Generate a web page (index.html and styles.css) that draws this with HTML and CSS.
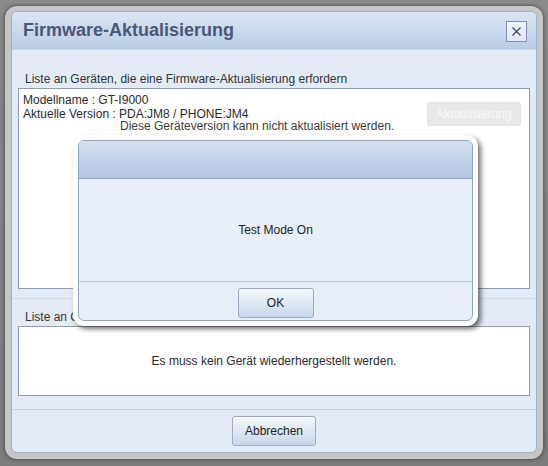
FILE: index.html
```html
<!DOCTYPE html>
<html lang="de">
<head>
  <meta charset="UTF-8">
  <title>Firmware-Aktualisierung</title>
  <link rel="stylesheet" href="styles.css">
</head>
<body>

  <div class="frame">
    <div class="window">
      <header class="win-head">
        <h1>Firmware-Aktualisierung</h1>
        <button class="close" type="button" aria-label="Schließen">
          <svg width="9" height="9" viewBox="0 0 9 9"><path d="M0.5 0.5 L8.5 8.5 M8.5 0.5 L0.5 8.5" stroke="#3c4a68" stroke-width="1.3" fill="none"/></svg>
        </button>
      </header>

      <section class="sect sect-update">
        <p class="label">Liste an Geräten, die eine Firmware-Aktualisierung erfordern</p>
        <div class="box box-update">
          <div class="device">
            <div>Modellname : GT-I9000</div>
            <div>Aktuelle Version : PDA:JM8 / PHONE:JM4</div>
            <div class="note">Diese Geräteversion kann nicht aktualisiert werden.</div>
          </div>
          <button class="btn-disabled" type="button" disabled>Aktualisierung</button>
        </div>
      </section>

      <section class="sect sect-restore">
        <p class="label">Liste an Geräten, die wiederhergestellt werden müssen</p>
        <div class="box box-restore">Es muss kein Gerät wiederhergestellt werden.</div>
      </section>

      <footer class="win-foot">
        <button class="btn" type="button">Abbrechen</button>
      </footer>

      <div class="modal">
        <div class="modal-inner">
          <div class="modal-head"></div>
          <div class="modal-body">Test Mode On</div>
          <div class="modal-foot">
            <button class="btn btn-ok" type="button">OK</button>
          </div>
        </div>
      </div>
    </div>
  </div>

</body>
</html>
```

FILE: styles.css
```css
    body {
      margin: 0;
      width: 548px;
      height: 466px;
      overflow: hidden;
      background: linear-gradient(#8a8a8a, #7c7c7c);
      font-family: "Liberation Sans", Arial, sans-serif;
      font-size: 12px;
      color: #2a2a2a;
    }

    .frame {
      margin: 6px 0 0 5px;
      width: 538px;
      box-sizing: border-box;
      padding: 5px 6px 6px 6px;
      background-color: #c6c6c6;
      border-radius: 12px;
      box-shadow: 0 0 4px rgba(0, 0, 0, 0.55);
    }

    .window {
      position: relative;
      border: 1px solid #9cafcb;
      border-radius: 6px;
      background-color: #e3ebf7;
      overflow: hidden;
    }

    .win-head {
      height: 37px;
      display: flex;
      align-items: center;
      justify-content: space-between;
      padding: 0 9px 0 11px;
      background: linear-gradient(#dbe5f3, #bacce5);
      border-bottom: 1px solid #c9d6e8;
    }

    .win-head h1 {
      margin: 0;
      font-size: 18px;
      font-weight: bold;
      color: #4a5878;
    }

    .close {
      width: 21px;
      height: 21px;
      margin-top: 2px;
      padding: 0;
      display: flex;
      align-items: center;
      justify-content: center;
      border: 1px solid #8090b0;
      background: linear-gradient(#f0f4fa, #dfe7f3);
    }

    .sect {
      padding: 22px 6px 9px 6px;
    }

    .sect-restore {
      padding: 11px 6px 13px 6px;
      border-top: 1px solid #cfdbeb;
    }

    .label {
      margin: 0 0 2px 7px;
      line-height: 14px;
      color: #333;
    }

    .box {
      background-color: #fff;
      border: 1px solid #8d9db4;
    }

    .box-update {
      height: 196px;
      display: flex;
      justify-content: space-between;
      align-items: flex-start;
      padding: 3px 8px 0 4px;
    }

    .device {
      line-height: 14px;
      padding-top: 1px;
    }

    .note {
      padding-left: 97px;
      margin-top: -2px;
      color: #3a3a3a;
    }

    .btn-disabled {
      margin-top: 10px;
      width: 94px;
      height: 24px;
      border: 1px solid #e6e6e6;
      border-radius: 2px;
      background-color: #e9e9e9;
      color: #fafafa;
      font-family: inherit;
      font-size: 12px;
    }

    .box-restore {
      height: 68px;
      display: flex;
      align-items: center;
      justify-content: center;
    }

    .win-foot {
      border-top: 1px solid #c3d1e4;
      padding: 6px 0;
      display: flex;
      justify-content: center;
    }

    .btn {
      height: 30px;
      padding: 0 12px;
      border: 1px solid #9aabc2;
      border-radius: 3px;
      background: linear-gradient(#f5f8fc, #c8d6ea);
      color: #222;
      font-family: inherit;
      font-size: 12px;
    }

    .btn-ok {
      width: 76px;
    }

    /* test-mode popup sitting over the window */
    .modal {
      position: absolute;
      left: 61px;
      top: 123px;
      width: 405px;
      height: 191px;
      box-sizing: border-box;
      padding: 5px;
      background-color: #fdfdfd;
      border-radius: 11px;
      box-shadow: 3px 3px 5px rgba(0, 0, 0, 0.55);
    }

    .modal-inner {
      height: 100%;
      box-sizing: border-box;
      border: 1px solid #8fa3c6;
      border-radius: 6px;
      background-color: #e8eff9;
      overflow: hidden;
      display: flex;
      flex-direction: column;
    }

    .modal-head {
      height: 37px;
      flex: none;
      background: linear-gradient(#d4dff0, #b3c6e2);
      border-bottom: 1px solid #90a6c9;
    }

    .modal-body {
      height: 102px;
      flex: none;
      display: flex;
      align-items: center;
      justify-content: center;
      color: #222;
    }

    .modal-foot {
      flex: 1;
      border-top: 1px solid #b7c7de;
      display: flex;
      justify-content: center;
      padding-top: 6px;
    }
```
